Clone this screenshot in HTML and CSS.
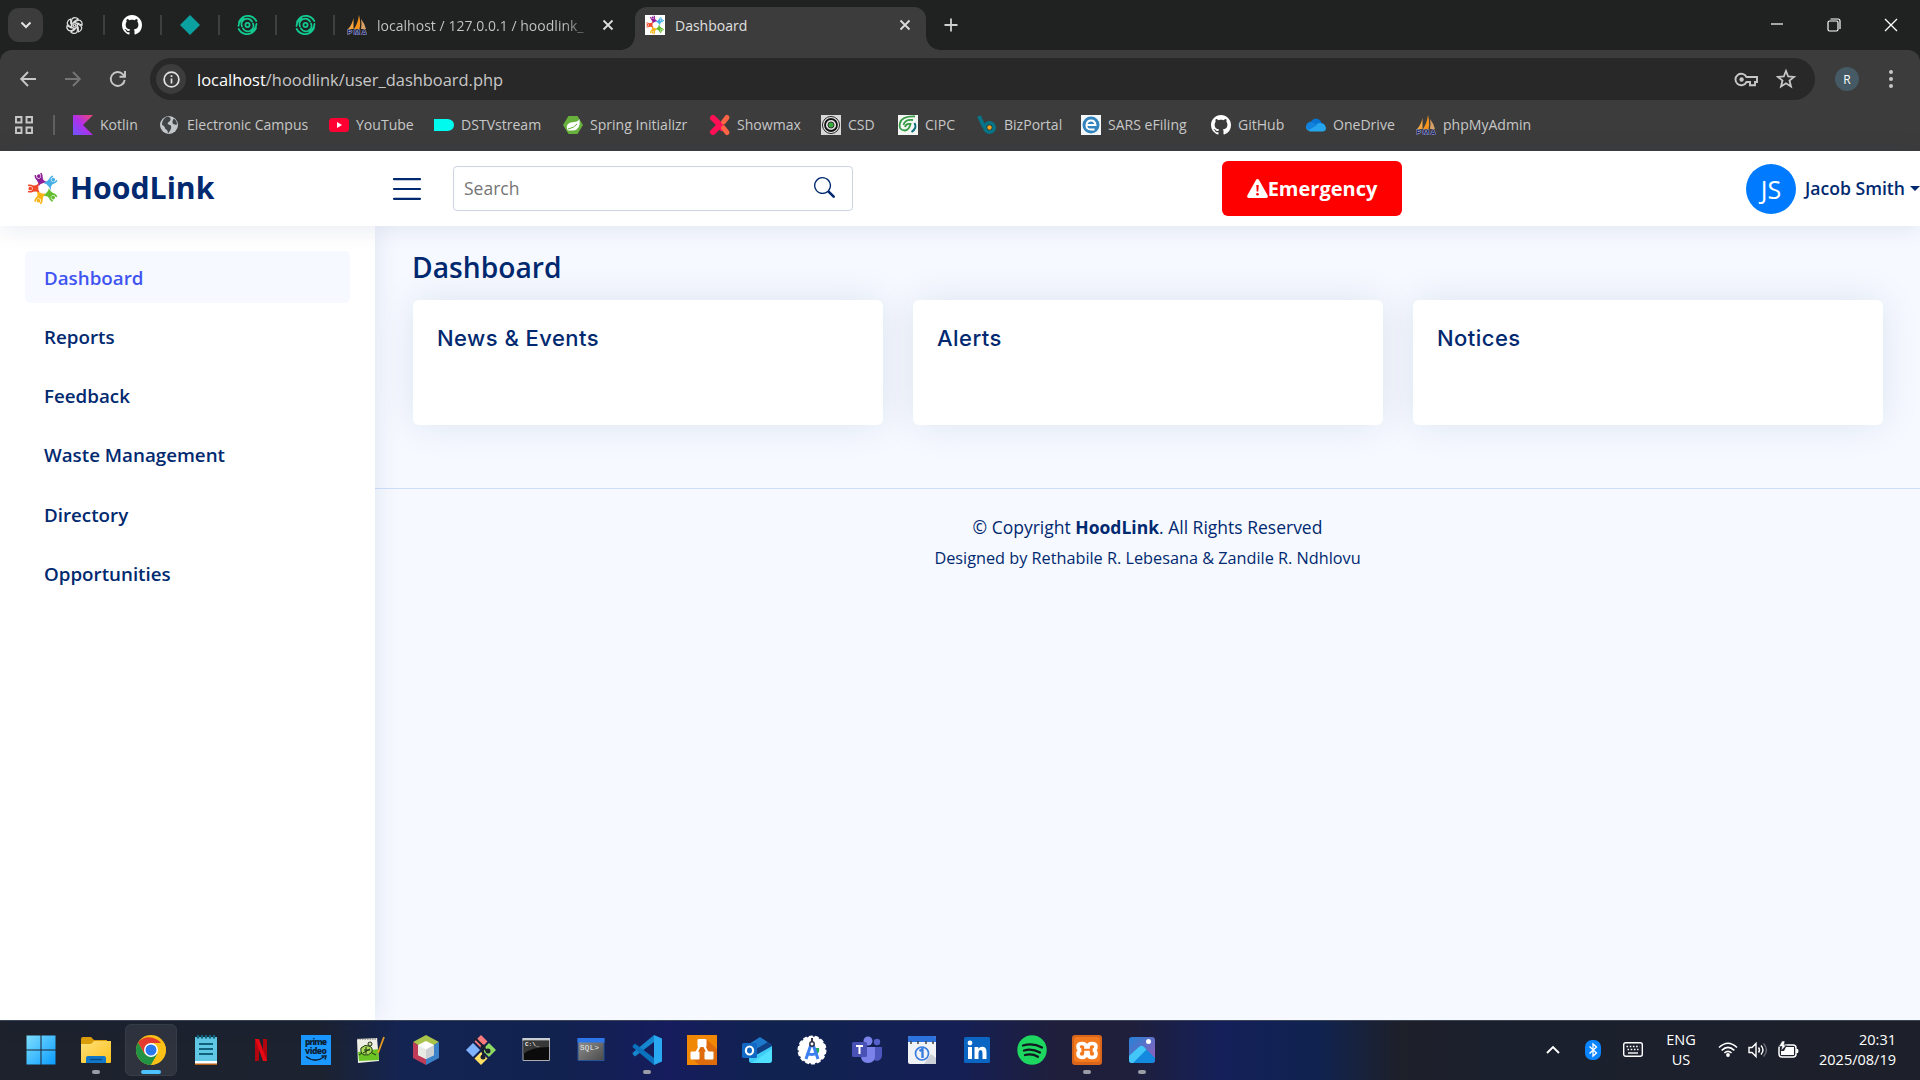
FILE: index.html
```html
<!DOCTYPE html>
<html lang="en">
<head>
<meta charset="utf-8">
<title>Dashboard</title>
<link rel="stylesheet" href="styles.css">
</head>
<body>
<svg class="sprite" aria-hidden="true">
  <defs>
    <linearGradient id="g-kotlin" x1="0" y1="1" x2="1" y2="0"><stop offset="0" stop-color="#6b57ff"/><stop offset=".5" stop-color="#b12fe8"/><stop offset="1" stop-color="#f0476c"/></linearGradient>
    <linearGradient id="g-win" x1="0" y1="0" x2="1" y2="1"><stop offset="0" stop-color="#7fe0ff"/><stop offset="1" stop-color="#0a9bff"/></linearGradient>
    <linearGradient id="g-folder" x1="0" y1="0" x2="1" y2="1"><stop offset="0" stop-color="#ffe07a"/><stop offset="1" stop-color="#fcc21d"/></linearGradient>
    <linearGradient id="g-photo" x1="0" y1="0" x2="1" y2="1"><stop offset="0" stop-color="#2382d6"/><stop offset="1" stop-color="#9c5bb8"/></linearGradient>
    <linearGradient id="g-gray" x1="0" y1="0" x2="1" y2="1"><stop offset="0" stop-color="#949494"/><stop offset="1" stop-color="#4a4a4a"/></linearGradient>
    <g id="person"><path d="M-3.200-15.200Q-4.200-10.500 0-10.300Q3.800-10.600 3.200-15.200" fill="none" stroke="currentColor" stroke-width="1.700" stroke-linecap="round"/><circle cx="0" cy="-13.600" r="1.900" fill="currentColor"/><path d="M-3.400-11.500Q0-9.500 3.400-11.500Q1.800-7.500 7-4.200Q3-6-1.500-5.200L-4-3.800Q-2.500-7-3.400-11.500Z" fill="currentColor"/></g>
  </defs>
  <symbol id="logo" viewBox="0 0 32 34">
    <g transform="translate(17 17)">
      <use href="#person" color="#8e1f96" transform="rotate(-21)"/>
      <use href="#person" color="#45aee6" transform="rotate(48)"/>
      <use href="#person" color="#63bd2c" transform="rotate(133)"/>
      <use href="#person" color="#f9b316" transform="rotate(202)"/>
      <use href="#person" color="#ef4a2a" transform="rotate(270)"/>
    </g>
  </symbol>
  <symbol id="github" viewBox="0 0 16 16"><path fill="#fff" d="M8 0C3.58 0 0 3.58 0 8c0 3.54 2.29 6.53 5.47 7.59.4.07.55-.17.55-.38 0-.19-.01-.82-.01-1.49-2.01.37-2.53-.49-2.69-.94-.09-.23-.48-.94-.82-1.130-.28-.15-.68-.52-.01-.53.63-.01 1.080.58 1.230.82.72 1.210 1.870.87 2.330.66.07-.52.28-.87.51-1.070-1.780-.2-3.640-.89-3.640-3.950 0-.87.31-1.590.82-2.150-.08-.2-.36-1.020.08-2.120 0 0 .67-.21 2.200.82.64-.18 1.320-.27 2-.27s1.360.09 2 .27c1.530-1.040 2.200-.82 2.200-.82.44 1.100.16 1.920.08 2.120.51.56.82 1.270.82 2.150 0 3.070-1.870 3.750-3.650 3.950.29.25.54.73.54 1.480 0 1.070-.01 1.930-.01 2.200 0 .21.15.46.55.38A8.010 8.010 0 0 0 16 8c0-4.420-3.580-8-8-8z"/></symbol>
  <symbol id="openai" viewBox="0 0 24 24"><g fill="none" stroke="#e3e3e3" stroke-width="1.500"><path id="oa" d="M8.300 14.200V6.300Q8.500 2 12.500 2Q15 2 16.600 3.800L12 6.500Q11.300 6.900 11.300 7.700V11.500"/><use href="#oa" transform="rotate(60 12 12)"/><use href="#oa" transform="rotate(120 12 12)"/><use href="#oa" transform="rotate(180 12 12)"/><use href="#oa" transform="rotate(240 12 12)"/><use href="#oa" transform="rotate(300 12 12)"/></g></symbol>
  <symbol id="finger" viewBox="0 0 20 20"><g fill="none" stroke="#12c98f" stroke-width="1.800" stroke-linecap="round"><circle cx="10" cy="10" r="2.100"/><path d="M4.500 11.500A5.600 5.600 0 0 1 14.500 6.500M15.500 8.500A5.600 5.600 0 0 1 5.500 13.500M1.500 7Q5 0 12 1Q16.500 1.800 18.800 6M1 11Q1.500 5.500 6 3.800M18.500 13Q15 20 8 19Q3.500 18.200 1.200 14M19 9Q18.500 14.500 14 16.200"/></g></symbol>
  <symbol id="pma" viewBox="0 0 20 20"><path d="M6.500 3V14H1Q5 10 6.500 3Z" fill="#f2a540"/><path d="M12 0Q14 8 12.500 14H7Q11 8 12 0Z" fill="#f7941d"/><path d="M14 4Q18 9 19 14H14Q15 9 14 4Z" fill="#d9a066"/><text x="0" y="20" font-family="Liberation Sans" font-weight="700" font-size="7.500" textLength="20" fill="#20265c" stroke="#aab0dc" stroke-width="1" paint-order="stroke">PMA</text></symbol>
  <symbol id="x" viewBox="0 0 12 12"><path d="M1.500 1.500l9 9m0-9l-9 9" stroke="#dedede" stroke-width="1.800" fill="none"/></symbol>
</svg>

<div class="browser">
  <div class="tabstrip">
    <div class="tabsearch"><svg width="12" height="8" viewBox="0 0 12 8"><path d="M1.500 1.500L6 6l4.500-4.500" fill="none" stroke="#e3e3e3" stroke-width="2"/></svg></div>
    <div class="pinned"><svg width="19" height="19"><use href="#openai"/></svg></div>
    <div class="pinned"><svg width="20" height="20"><use href="#github"/></svg></div>
    <div class="pinned"><svg width="20" height="20" viewBox="0 0 20 20"><path d="M10 0l10 10-10 10L0 10z" fill="#0aa1a0"/></svg></div>
    <div class="pinned"><svg width="21" height="20"><use href="#finger"/></svg></div>
    <div class="pinned"><svg width="21" height="20"><use href="#finger"/></svg></div>
    <div class="tab"><svg width="20" height="20"><use href="#pma"/></svg><span class="tab-title fade">localhost / 127.0.0.1 / hoodlink_</span><svg width="12" height="12"><use href="#x"/></svg></div>
    <div class="tab active"><span class="favicon"><svg width="20" height="20"><use href="#logo"/></svg></span><span class="tab-title">Dashboard</span><svg width="12" height="12"><use href="#x"/></svg></div>
    <svg class="newtab" width="14" height="14" viewBox="0 0 14 14"><path d="M7 .5v13M.5 7h13" stroke="#d0d0d0" stroke-width="1.800"/></svg>
    <div class="winctl">
      <svg width="14" height="14" viewBox="0 0 14 14"><path d="M1 6h12" stroke="#fff" stroke-width="1.200"/></svg>
      <svg width="14" height="14" viewBox="0 0 14 14"><rect x="1" y="3" width="10" height="10" rx="1.500" fill="none" stroke="#fff" stroke-width="1.200"/><path d="M3.500 1H11q2 0 2 2v8" fill="none" stroke="#fff" stroke-width="1.200"/></svg>
      <svg width="14" height="14" viewBox="0 0 14 14"><path d="M1 1l12 12M13 1L1 13" stroke="#fff" stroke-width="1.300"/></svg>
    </div>
  </div>
  <div class="toolbar">
    <svg width="16" height="16" viewBox="0 0 16 16"><path d="M16 8H1.500M8 1L1.200 8 8 15" fill="none" stroke="#c7c7c7" stroke-width="1.900"/></svg>
    <svg width="16" height="16" viewBox="0 0 16 16"><path d="M0 8h14.500M8 1l6.800 7L8 15" fill="none" stroke="#757575" stroke-width="1.900"/></svg>
    <svg width="16" height="16" viewBox="0 0 16 16"><path d="M14.700 9A7 7 0 1 1 13 3.300L15 5.300M15 0v5.700H9.500" fill="none" stroke="#c7c7c7" stroke-width="1.900"/></svg>
    <div class="omnibox">
      <span class="info"><svg width="17" height="17" viewBox="0 0 17 17"><circle cx="8.500" cy="8.500" r="7.400" fill="none" stroke="#e3e3e3" stroke-width="1.700"/><path d="M8.500 7.500v5M8.500 4.200v1.700" stroke="#e3e3e3" stroke-width="1.700"/></svg></span>
      <span class="url"><b>localhost</b>/hoodlink/user_dashboard.php</span>
      <svg width="23" height="15" viewBox="0 0 23 15"><path d="M11.500 5A5.800 5.800 0 1 0 11.500 10H15v3.200h5V10h2V5Z" fill="none" stroke="#c7c7c7" stroke-width="1.900"/><circle cx="6.600" cy="7.500" r="2.200" fill="#c7c7c7"/></svg>
      <svg width="20" height="20" viewBox="0 0 20 20"><path d="M10 2l2.200 5.500 5.800.4-4.500 3.700 1.500 5.800-5-3.200-5 3.200 1.500-5.800L2 7.900l5.800-.4z" fill="none" stroke="#c7c7c7" stroke-width="1.800"/></svg>
    </div>
    <span class="profile">R</span>
    <svg width="6" height="20" viewBox="0 0 6 20"><g fill="#c7c7c7"><circle cx="3" cy="3" r="2"/><circle cx="3" cy="10" r="2"/><circle cx="3" cy="17" r="2"/></g></svg>
  </div>
  <div class="bookmarks">
    <svg class="apps" width="18" height="18" viewBox="0 0 18 18"><path d="M1 1h5.500v5.500H1zM11.500 1H17v5.500h-5.500zM1 11.500h5.500V17H1zM11.500 11.500H17V17h-5.500z" fill="none" stroke="#c7c7c7" stroke-width="1.900"/></svg>
    <i class="divider"></i>
    <span class="bm"><svg viewBox="0 0 20 20"><path d="M0 0h20L10 10l10 10H0z" fill="url(#g-kotlin)"/></svg>Kotlin</span>
    <span class="bm"><svg viewBox="0 0 20 20"><circle cx="9" cy="10" r="9" fill="#c3c7cb"/><path d="M8 1.500Q12 3 10 6Q8 7 7.500 9L11 10.500Q12 14 8 18.500Q8 15 5 13.500Q5 11 2 10Q2 3 8 1.500ZM14 3.500Q18 7 16.500 10L13 9Q11.500 6 14 3.500Z" fill="#414447"/></svg>Electronic Campus</span>
    <span class="bm"><svg viewBox="0 0 20 20"><rect y="3" width="20" height="14" rx="3.500" fill="#ff0033"/><path d="M8 7v6l5-3z" fill="#fff"/></svg>YouTube</span>
    <span class="bm"><svg viewBox="0 0 20 20"><path d="M0 4h14q6 1 6 6t-6 6H0z" fill="#00fbee"/></svg>DSTVstream</span>
    <span class="bm"><svg viewBox="0 0 20 20"><path d="M5.500 1h9L20 10l-5.500 9h-9L0 10z" fill="#68b13c"/><path d="M16.500 4Q18 15 10 15.500H5Q2.500 12 5 9Q7 7 11 7Q15 7 16.500 4Z" fill="#fff"/><path d="M5 14q6-1 9-5" fill="none" stroke="#68b13c"/></svg>Spring Initializr</span>
    <span class="bm"><svg viewBox="0 0 20 20"><path d="M3 3l7 7 2 3M10 10l-7 7" stroke="#ff0f55" stroke-width="6" stroke-linecap="round"/><path d="M17 2.500L13.500 7M13.500 13l3.500 4.500" stroke="#ff6545" stroke-width="5" stroke-linecap="round"/></svg>Showmax</span>
    <span class="bm"><svg viewBox="0 0 20 20"><path d="M0 0h20v20H0z" fill="#d8d8d8"/><circle cx="10" cy="10" r="8.500" fill="#eee" stroke="#222"/><circle cx="10" cy="10" r="6" fill="#ddd" stroke="#111" stroke-width="1.800"/><circle cx="10" cy="10" r="3" fill="#36ad38" stroke="#333"/></svg>CSD</span>
    <span class="bm"><svg viewBox="0 0 20 20"><path d="M0 0h20v20H0z" fill="#f4f6f3"/><path d="M17 1.500Q4 1 2 8Q0 15 7 15.500Q11 15 12.500 9Q8 8 7 12M15 5Q7 4 5.500 10" fill="none" stroke="#359b45" stroke-width="1.800"/><path d="M16.500 8q3 5-3 9" fill="none" stroke="#0c6e7d" stroke-width="2"/></svg>CIPC</span>
    <span class="bm"><svg viewBox="0 0 20 20"><path d="M2 1l5 11" stroke="#087487" stroke-width="4"/><circle cx="12.500" cy="12.500" r="4.700" fill="#21343a" stroke="#087487" stroke-width="3.600"/><circle cx="12.500" cy="12.500" r="2.200" fill="#f5a21c"/></svg>BizPortal</span>
    <span class="bm"><svg viewBox="0 0 20 20"><path d="M0 0h20v20H0z" fill="#f4f8fb"/><circle cx="10" cy="10" r="8.500" fill="#3485bd"/><path d="M5.500 10h9Q14 5.500 10 5.500T5.500 10 10 14.500h3.500" fill="none" stroke="#fff" stroke-width="1.900"/></svg>SARS eFiling</span>
    <span class="bm"><svg viewBox="0 0 16 16"><use href="#github"/></svg>GitHub</span>
    <span class="bm"><svg viewBox="0 0 20 20"><path d="M1 11Q1 7 5 6.500Q8 2 12 4Q15 5 15.500 8Q19 8 19 12L10 16Z" fill="#0873d1"/><path d="M2 14L13 8Q19 8 20 13Q20 16 17 16.500H4Q1 16 0 13Q0 10 3 9l9 6" fill="#26a5ef"/><path d="M0 12Q0 8 4 7q4 0 7 3L3 15Q0 14 0 12Z" fill="#1283dd"/></svg>OneDrive</span>
    <span class="bm"><svg viewBox="0 0 20 20"><use href="#pma"/></svg>phpMyAdmin</span>
  </div>
</div>

<div class="page">
  <header class="header">
    <div class="brand"><svg width="31" height="33"><use href="#logo"/></svg><span>HoodLink</span></div>
    <svg class="toggle" width="28" height="22" viewBox="0 0 28 22"><path d="M1 1.200h26M1 11h26M1 20.800h26" stroke="#012970" stroke-width="2.200" stroke-linecap="round"/></svg>
    <div class="search"><span>Search</span><svg width="21" height="21" viewBox="0 0 16 16"><path fill="#012970" d="M11.742 10.344a6.500 6.500 0 1 0-1.397 1.398h-.001c.03.04.062.078.098.115l3.850 3.850a1 1 0 0 0 1.415-1.414l-3.850-3.850a1.007 1.007 0 0 0-.115-.1zM12 6.500a5.500 5.500 0 1 1-11 0 5.500 5.500 0 0 1 11 0z"/></svg></div>
    <div class="emergency"><svg width="21" height="19" viewBox="0 0 21 19"><path d="M10.500 0Q11.500 0 12 1l8.600 15.200Q21.500 18.800 19 19H2Q-.500 18.800.400 16.200L9 1Q9.500 0 10.500 0Z" fill="#fff"/><path d="M9.300 6h2.400l-.4 6.500H9.700z" fill="#f00"/><circle cx="10.500" cy="15.200" r="1.300" fill="#f00"/></svg><span>Emergency</span></div>
    <div class="account"><span class="avatar">JS</span><span class="name">Jacob Smith</span><i class="caret"></i></div>
  </header>
  <div class="body">
    <nav class="sidebar">
      <a class="item current">Dashboard</a>
      <a class="item">Reports</a>
      <a class="item">Feedback</a>
      <a class="item">Waste Management</a>
      <a class="item">Directory</a>
      <a class="item">Opportunities</a>
    </nav>
    <main class="main">
      <h1>Dashboard</h1>
      <section class="cards">
        <article class="card">News &amp; Events</article>
        <article class="card">Alerts</article>
        <article class="card">Notices</article>
      </section>
      <footer class="footer">
        <div class="copyright">© Copyright <b>HoodLink</b>. All Rights Reserved</div>
        <div class="credits">Designed by Rethabile R. Lebesana &amp; Zandile R. Ndhlovu</div>
      </footer>
    </main>
  </div>
</div>

<div class="taskbar">
  <div class="apps-row">
    <span class="app"><svg viewBox="0 0 30 30"><path d="M.500.500h14v14H.500zM15.500.500h14v14h-14zM.500 15.500h14v14H.500zM15.500 15.500h14v14h-14z" fill="url(#g-win)"/></svg></span>
    <span class="app running"><svg viewBox="0 0 30 30"><path d="M0 4q0-2 2-2h8l3 3h13v8H0z" fill="#dc9d0b"/><path d="M0 9h10l3-3h17v21q0 1-1 1H1q-1 0-1-1z" fill="url(#g-folder)"/><path d="M5 28v-5q0-2 2-2h16q2 0 2 2v5z" fill="#1076c8"/><path d="M9 24.500h12" stroke="#0a4a82" stroke-width="1.300"/></svg></span>
    <span class="app selected"><svg viewBox="0 0 30 30"><circle cx="15" cy="15" r="15" fill="#fbc116"/><path d="M15 15H28A15 15 0 0 0 2 7.500L8.500 18.700z" fill="#e33b2e"/><path d="M2 7.500A15 15 0 0 0 15 30L21.500 18.800 8.500 18.700z" fill="#229342"/><path d="M15 8h13A15 15 0 0 1 15 30l6.500-11z" fill="#fbc116"/><circle cx="15" cy="15" r="7" fill="#fff"/><circle cx="15" cy="15" r="5.500" fill="#2a78ee"/></svg></span>
    <span class="app"><svg viewBox="0 0 30 30"><path d="M4 2h22v26H4z" fill="#60c8e4"/><path d="M4 26h22v3H4z" fill="#fff"/><path d="M4 28.500h22V30H4z" fill="#b45f16"/><path d="M8 9h14M8 14h14M8 19h14" stroke="#10617c" stroke-width="2"/><path d="M7 1v1.500M11 1v1.500M15 1v1.500M19 1v1.500M23 1v1.500" stroke="#12657f" stroke-width="2.400" stroke-linecap="round"/></svg></span>
    <span class="app"><svg viewBox="0 0 30 30"><path d="M9 4h4v22H9zM17 4h4v22h-4z" fill="#b1060f"/><path d="M9 4h4l8 22h-4z" fill="#e50914"/></svg></span>
    <span class="app"><svg viewBox="0 0 30 30"><path d="M0 0h30v30H0z" fill="#1a98ff"/><text x="15" y="10" text-anchor="middle" font-family="Open Sans" font-weight="800" font-size="8.500" textLength="22" fill="#0b2238">prime</text><text x="15" y="18.500" text-anchor="middle" font-family="Open Sans" font-weight="800" font-size="8.500" textLength="22" fill="#0b2238">video</text><path d="M5 21.500q9 7 18 .5M20.500 21h4.500l-1 3.500" fill="none" stroke="#0b2238" stroke-width="1.500"/></svg></span>
    <span class="app"><svg viewBox="0 0 30 30"><path d="M1 4l20-1 2 23-21 2z" fill="#eef0e6"/><path d="M2 17l20-3 1 11L3 26z" fill="#6cc424"/><path d="M5 13Q9 9 13 11q4 1 3 6-3 4-8 3-4-2-3-7z" fill="#a9d95a" stroke="#1d3510"/><path d="M8 15h6M7 18l7-4M10 12v7M3 20l3-2M16 18l4 2" stroke="#1d3510"/><circle cx="14" cy="9" r="2" fill="#c9e79a" stroke="#222"/><path d="M28 2L22 18" stroke="#e39a22" stroke-width="1.800"/><path d="M1 4h21" stroke="#666" stroke-dasharray="1.500 1"/></svg></span>
    <span class="app"><svg viewBox="0 0 30 30"><path d="M15 0l13 7-13 8L2 7z" fill="#a9c34c"/><path d="M2 7v16l13 7V15z" fill="#c03b58"/><path d="M28 7v16l-13 7V15z" fill="#3c82c9"/><path d="M15 6l8 4v10l-8 4-8-4V10z" fill="#fff"/><path d="M15 14.500l8-4.500v10l-8 4z" fill="#ccd0d2"/><path d="M15 14.500L7 10v10l8 4z" fill="#e8ebe4"/></svg></span>
    <span class="app"><svg viewBox="0 0 30 30"><path d="M15 0l6.500 6.500L15 13 8.500 6.500z" fill="#fb7b7d"/><path d="M7 8l7 7-7 7-7-7z" fill="#80b3ff"/><path d="M23 8l7 7-7 7-7-7z" fill="#8ddb63"/><path d="M15 17l6.500 6.500L15 30l-6.500-6.500z" fill="#ffe066"/><path d="M11 5l6 6v12M17 12l5 5M9 3l3 3" stroke="#1b2030" stroke-width="2" fill="none"/><g fill="#1b2030"><circle cx="17" cy="12" r="2.500"/><circle cx="17" cy="22" r="2.500"/><circle cx="22" cy="16" r="2.500"/></g></svg></span>
    <span class="app"><svg viewBox="0 0 30 30"><path d="M2 3.500h26.500v22H2z" fill="#0b0b0b" stroke="#a9adb2"/><path d="M1.500 3h27.500v2.500H1.500z" fill="#c9ced2"/><path d="M2.500 6H28v6Q10 12 2.500 19z" fill="#383838"/><text x="4" y="11" font-family="Liberation Mono" font-size="6" font-weight="700" fill="#eee">C:\_</text></svg></span>
    <span class="app"><svg viewBox="0 0 30 30"><path d="M2 3.500h26v22H2z" fill="url(#g-gray)" stroke="#29549a"/><path d="M1.500 3h27v4.500h-27z" fill="#2c76ea"/><text x="4" y="14.500" font-family="Liberation Mono" font-size="7.500" textLength="19" fill="#eee">SQL&gt;</text></svg></span>
    <span class="app running"><svg viewBox="0 0 30 30"><path d="M22 7L3 21.500l-2-2Q0 18.500 1 17.500L22 0z" fill="#1687cf"/><path d="M22 23L3 8.500l-2 2q-1 1 0 2L22 30z" fill="#0b72bd"/><path d="M22 0l8 3.500v23L22 30z" fill="#29a9f1"/></svg></span>
    <span class="app"><svg viewBox="0 0 30 30"><path d="M0 0h30v30H0z" fill="#f08705"/><path d="M19 4l11 10v16H12L5 23z" fill="#df6c0c"/><path d="M14.500 8L8 20M15.500 8L22 20" stroke="#fff" stroke-width="2.200"/><g fill="#fff"><rect x="10.500" y="4" width="9" height="8" rx="1"/><rect x="3.500" y="16.500" width="9" height="8" rx="1"/><rect x="17.500" y="16.500" width="9" height="8" rx="1"/></g></svg></span>
    <span class="app"><svg viewBox="0 0 30 30"><path d="M7 9L18 2l12 8v15q0 3-3 3H10q-3 0-3-3z" fill="#1d79cc"/><path d="M14 14l12-7 4 3v4L16 22z" fill="#0f3f84"/><path d="M7 22l9-3 14-8v14q0 3-3 3H10q-3 0-3-3z" fill="#3fcdf5"/><path d="M10 28L30 14v10q0 4-4 4z" fill="#51e0ff"/><rect y="8" width="15" height="15" rx="1.500" fill="#1169c5"/><ellipse cx="7.500" cy="15.500" rx="3.600" ry="4" fill="none" stroke="#fff" stroke-width="2.200"/></svg></span>
    <span class="app"><svg viewBox="0 0 30 30"><circle cx="15" cy="15" r="13.500" fill="#fff" stroke="#fff" stroke-width="2" stroke-dasharray="4 2"/><path d="M17 13h5q1 4-2 6z" fill="#26a85c"/><path d="M9 24L14.500 8h1L21 24M9.500 18q5 3 11 0" fill="none" stroke="#3b7ff0" stroke-width="3"/><circle cx="15" cy="9" r="2.200" fill="#fff" stroke="#334" stroke-width="1.500"/><path d="M15 3v4" stroke="#334" stroke-width="2"/></svg></span>
    <span class="app"><svg viewBox="0 0 30 30"><circle cx="25" cy="7" r="3.200" fill="#5560c9"/><path d="M21 12h9v8q0 5-5 6-3 0-5-3z" fill="#4c56bd"/><circle cx="16" cy="6" r="4.500" fill="#7b83eb"/><path d="M9 12h14v9q0 7-7 7t-7-7z" fill="#7b83eb"/><rect y="7" width="15" height="15" rx="1.500" fill="#4a51b5"/><path d="M4 11h7M7.500 11v8" stroke="#fff" stroke-width="2"/></svg></span>
    <span class="app"><svg viewBox="0 0 30 30"><rect x="1" y="1" width="28" height="28" rx="2" fill="#f0f2f5"/><path d="M1 7V3q0-2 2-2h24q2 0 2 2v4z" fill="#2d73df"/><path d="M17 29L24 19l5 4v6z" fill="#ccd0d8"/><path d="M4 6v3M11 6v3M19 6v3M26 6v3" stroke="#444" stroke-width="1.500"/><circle cx="15" cy="18.500" r="6.500" fill="none" stroke="#3a7de0" stroke-width="1.700"/><path d="M12.500 16l3-2v9" fill="none" stroke="#3a7de0" stroke-width="2.400"/></svg></span>
    <span class="app"><svg viewBox="0 0 30 30"><rect x="2" y="2" width="26" height="26" rx="1.500" fill="#0a66c2"/><circle cx="8" cy="8" r="2.400" fill="#fff"/><path d="M6 12h4v12H6zM12.500 12h3.800v1.800q1.200-2.100 3.900-2.100 4.300 0 4.300 5.300v7h-4v-6.300q0-2.700-2-2.700t-2 2.700V24h-4z" fill="#fff"/></svg></span>
    <span class="app"><svg viewBox="0 0 30 30"><circle cx="15" cy="15" r="14.700" fill="#1ed760"/><path d="M6 10.500q10-3 19 2M7 15.500q8-2.300 16 2M8 20q7-1.700 13 1.700" fill="none" stroke="#121820" stroke-width="2.300" stroke-linecap="round"/></svg></span>
    <span class="app running"><svg viewBox="0 0 30 30"><rect width="30" height="30" rx="3" fill="#d9651a"/><rect x="2" y="2" width="26" height="25" rx="3" fill="#f47a20"/><path d="M10 8.500q-4 0-4 3t3 3.500q-3 1-3 4t4 3.500q4 0 4-4v-1h2v1q0 4 4 4t4-3.500-3-4q3-.500 3-3.500t-4-3q-4 0-4 3.500h-2q0-3.500-4-3.500z" fill="none" stroke="#fff" stroke-width="3.600"/></svg></span>
    <span class="app running"><svg viewBox="0 0 30 30"><rect x="2" y="2" width="26" height="26" rx="3" fill="url(#g-photo)"/><path d="M2 21L12.500 11.500q2-1.500 4 0L28 23v2q0 3-3 3H5q-3 0-3-3z" fill="#1389e0"/><path d="M2 21L12.500 11.500q2-1.500 4 0l3 3L6 28H5q-3 0-3-3z" fill="#43c7f8"/><circle cx="21.500" cy="6.500" r="2.500" fill="#fff"/></svg></span>
  </div>
  <div class="tray">
    <svg class="chev" width="14" height="9" viewBox="0 0 14 9"><path d="M1 8l6-6 6 6" fill="none" stroke="#fff" stroke-width="1.900"/></svg>
    <svg class="bt" width="16" height="20" viewBox="0 0 16 20"><rect width="16" height="20" rx="7" fill="#0a84ff"/><path d="M4.500 6.500l7 6.500L8 16V4l3.500 3-7 6.500" fill="none" stroke="#fff" stroke-width="1.300"/></svg>
    <svg class="kb" width="20" height="15" viewBox="0 0 20 15"><rect x=".700" y=".700" width="18.600" height="13.600" rx="2" fill="none" stroke="#fff" stroke-width="1.400"/><path d="M3.500 4.500h13M4.500 7.500h11" stroke="#fff" stroke-width="1.600" stroke-dasharray="1.600 1.600"/><path d="M5 11h10" stroke="#fff" stroke-width="1.400"/></svg>
    <div class="lang"><span>ENG</span><span>US</span></div>
    <svg class="wifi" width="20" height="15" viewBox="0 0 20 15"><path d="M1 5.500Q10-3 19 5.500M3.700 8.300Q10 2.300 16.300 8.300M6.400 11Q10 7.600 13.600 11" fill="none" stroke="#fff" stroke-width="1.600"/><circle cx="10" cy="13" r="1.900" fill="#fff"/></svg>
    <svg class="vol" width="20" height="16" viewBox="0 0 20 16"><path d="M1 5.500h3L8 1.500v13l-4-4H1z" fill="none" stroke="#fff" stroke-width="1.400"/><path d="M10.500 5.500q2 2.500 0 5M13 3.500q4 4.500 0 9" fill="none" stroke="#fff" stroke-width="1.400"/><path d="M15.500 1.500q6 6.500 0 13" fill="none" stroke="#656a75" stroke-width="1.400"/></svg>
    <svg class="bat" width="21" height="17" viewBox="0 0 21 17"><rect x="1" y="4" width="17" height="12" rx="3" fill="none" stroke="#fff" stroke-width="1.500"/><path d="M8 6h8v8H3v-4h3zM18 8h2q1 2 0 4h-2z" fill="#fff"/><path d="M4 0h3L6 4h2.500L3 10l1-4.500H1z" fill="#fff" stroke="#1d212b" stroke-width=".6"/></svg>
    <div class="clock"><span>20:31</span><span>2025/08/19</span></div>
  </div>
</div>
</body>
</html>
```
FILE: styles.css
```css
* { box-sizing: border-box; }
body { margin: 0; width: 1920px; height: 1080px; overflow: hidden; display: flex; flex-direction: column; font-family: "Open Sans", "Noto Sans", sans-serif; color: #012970; }
svg { display: block; flex: none; overflow: visible; }
.sprite { position: absolute; width: 0; height: 0; }

/* browser frame */
.browser { height: 151px; flex: none; background: #202221; display: flex; flex-direction: column; }
.tabstrip { height: 50px; display: flex; align-items: center; padding-left: 8px; font-size: 14px; color: #c7c7c7; }
.tabsearch { width: 35px; height: 34px; border-radius: 11px; background: #3c3c3c; display: grid; place-items: center; margin-right: 4px; }
.pinned { width: 57.6px; height: 20px; border-right: 2px solid #3e403f; display: grid; place-items: center; }
.tab { width: 300px; display: flex; align-items: center; height: 43px; align-self: flex-end; padding: 0 21px 7px 12px; }
.tab-title { flex: 1; margin: 0 14px 0 10px; white-space: nowrap; }
.fade { background: linear-gradient(90deg, #c7c7c7 88%, #444 100%); background-clip: text; color: transparent; letter-spacing: .03px; }
.tab.active { width: 291px; background: #3c3c3c; border-radius: 12px 12px 0 0; color: #e0e0e0; padding: 0 15px 7px 10px; position: relative; }
.tab.active::before, .tab.active::after { content: ""; position: absolute; bottom: 0; width: 14px; height: 14px; }
.tab.active::before { left: -14px; background: radial-gradient(circle at 0 0, #202221 13.500px, #3c3c3c 14px); }
.tab.active::after { right: -14px; background: radial-gradient(circle at 100% 0, #202221 13.500px, #3c3c3c 14px); }
.favicon { background: #fff; width: 20px; height: 20px; }
.newtab { margin-left: 18px; }
.winctl { margin-left: auto; display: flex; gap: 43px; padding-right: 22px; }
.toolbar { height: 58px; flex: none; background: #3c3c3c; border-radius: 12px 12px 0 0; display: flex; align-items: center; padding: 0 24px 0 20px; gap: 29px; }
.omnibox { flex: none; width: 1665px; height: 42px; margin-left: -5px; border-radius: 21px; background: #282828; display: flex; align-items: center; padding: 0 19px 0 6px; }
.info { width: 30px; height: 30px; border-radius: 50%; background: #3c3c3c; display: grid; place-items: center; }
.url { flex: 1; margin-left: 11px; font-size: 16.430px; color: #c7c7c7; }
.url b { font-weight: 400; color: #fff; }
.omnibox svg:nth-of-type(2) { margin-left: 18px; }
.profile { width: 24px; height: 24px; margin-left: -9px; border-radius: 50%; background: #455a64; color: #fff; font-size: 12px; display: grid; place-items: center; }
.bookmarks { height: 43px; background: #3c3c3c; display: grid; grid-template-columns: 38px 20px 87px 169px 105px 129px 147px 111px 77px 79px 104px 130px 95px 110px 130px; align-items: center; padding: 0 0 10px 15px; font-size: 14.050px; color: #c7c7c7; }
.divider { width: 2px; height: 20px; background: #606060; }
.bm { display: flex; align-items: center; gap: 7px; white-space: nowrap; }
.bm svg { width: 20px; height: 20px; }

/* application */
.page { height: 869px; flex: none; background: #f6f9ff; display: flex; flex-direction: column; }
.header { height: 75px; flex: none; background: #fff; display: flex; align-items: center; box-shadow: 0 2px 25px rgba(1, 41, 112, .1); position: relative; z-index: 2; }
.brand { width: 393px; padding-left: 27px; display: flex; align-items: center; gap: 12px; font-size: 30.200px; line-height: 40px; font-weight: 700; }
.brand span { padding-bottom: 1px; }
.search { width: 400px; height: 45px; margin-left: 32px; border: 1px solid rgba(1, 41, 112, .2); border-radius: 4px; display: flex; align-items: center; justify-content: space-between; padding: 0 17px 2px 10px; font-size: 17.500px; color: #757575; }
.emergency { width: 180px; height: 55px; margin-left: 369px; border-radius: 6px; background: #f00; color: #fff; font-size: 20px; font-weight: 700; display: flex; align-items: center; justify-content: center; }
.account { margin-left: auto; display: flex; align-items: center; }
.avatar { width: 50px; height: 50px; border-radius: 50%; background: #007bff; color: #fff; font-size: 25px; display: grid; place-items: center; line-height: 48px; }
.name { margin-left: 9px; padding-bottom: 2px; font-size: 17.600px; font-weight: 600; white-space: nowrap; }
.caret { margin-left: 5px; border: 5px solid transparent; border-top-color: #012970; border-bottom: 0; }
.body { flex: 1; display: flex; }
.sidebar { width: 375px; background: #fff; padding: 25px; display: flex; flex-direction: column; gap: 7.300px; box-shadow: 0 0 25px rgba(1, 41, 112, .1); position: relative; z-index: 1; }
.item { height: 52px; border-radius: 5px; padding-left: 19px; display: flex; align-items: center; font-size: 18.750px; font-weight: 600; }
.item.current { background: #f6f9ff; color: #4154f1; }
.main { flex: 1; }
h1 { margin: 0 0 0 37px; padding-top: 21px; height: 74px; line-height: 41px; font-size: 28.200px; font-weight: 600; }
.cards { padding: 0 37px 0 38px; display: grid; grid-template-columns: repeat(3, 1fr); gap: 30px; }
.card { height: 125px; border-radius: 6px; background: #fff; box-shadow: 0 0 38px rgba(1, 41, 112, .1); padding: 25px 24px; font: 500 22px/27px Inter, sans-serif; letter-spacing: .45px; }
.footer { margin-top: 63px; border-top: 1px solid #cddfff; padding-top: 25px; text-align: center; }
.copyright { font-size: 17.500px; line-height: 27px; }
.credits { font-size: 16.250px; line-height: 24px; margin-top: 5px; }

/* taskbar */
.taskbar { height: 60px; flex: none; border-top: 1px solid #3c4656; background: linear-gradient(90deg, #1d222c 0, #1c222f 320px, #142452 400px, #12224f 560px, #161c5d 670px, #10234f 770px, #141f56 950px, #201f3b 1060px, #201f3b 1130px, #14205a 1220px, #10234f 1320px, #1e202a 1400px, #1b202e 1500px, #1d202a); display: flex; color: #fff; }
.apps-row { display: flex; padding: 0 0 1px 13px; }
.app { width: 55.100px; display: grid; place-items: center; position: relative; }
.app svg { width: 30px; height: 30px; position: relative; }
.running::after, .selected::after { content: ""; position: absolute; bottom: 5px; width: 8px; height: 4px; border-radius: 2px; background: #9a9da6; }
.selected::after { width: 20px; background: #4cc2ff; }
.selected::before { content: ""; position: absolute; width: 50px; height: 50px; border-radius: 6px; background: #2f333e; border: 1px solid #393d47; }
.tray { margin-left: auto; display: flex; align-items: center; padding: 0 24px 2px 0; font-size: 14.500px; line-height: 20px; }
.lang, .clock { display: flex; flex-direction: column; align-items: center; }
.clock { align-items: flex-end; width: 78px; }
.bt { margin-left: 25px; }
.kb { margin-left: 22px; }
.lang { width: 30px; margin-left: 23px; }
.wifi { margin-left: 22px; }
.vol { margin-left: 10px; }
.bat { margin-left: 10px; }
.clock { margin-left: 19px; }
```
